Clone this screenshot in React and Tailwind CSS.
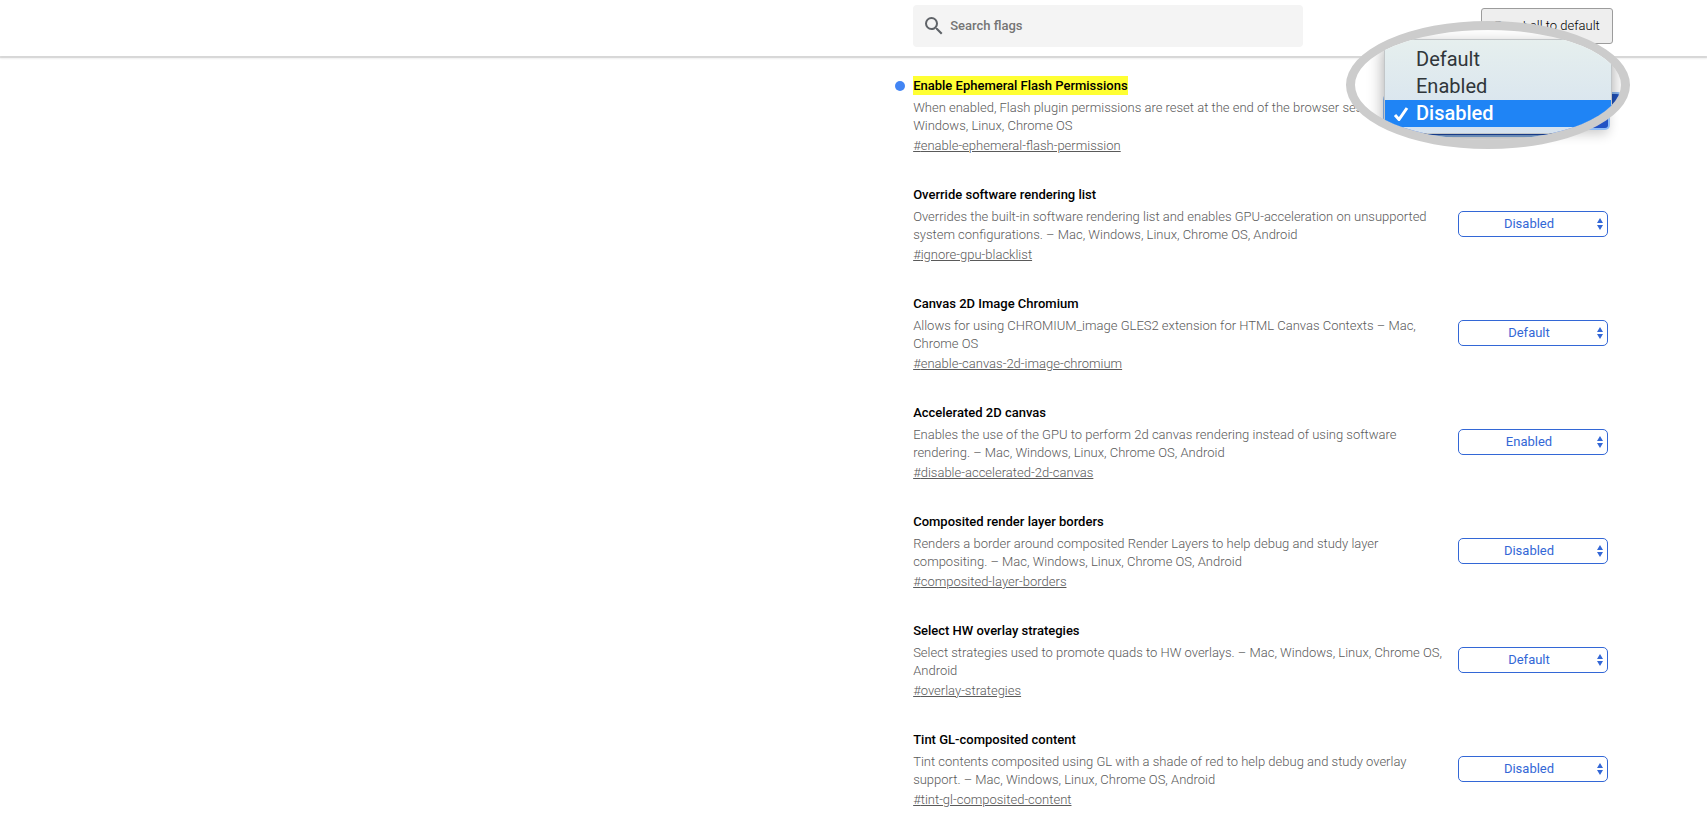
import { MdSearch } from "react-icons/md"

const FLAGS = [
  {
    id: "enable-ephemeral-flash-permission",
    name: "Enable Ephemeral Flash Permissions",
    description: "When enabled, Flash plugin permissions are reset at the end of the browser session. – Mac, Windows, Linux, Chrome OS",
    value: "Disabled",
    highlighted: true,
  },
  {
    id: "ignore-gpu-blacklist",
    name: "Override software rendering list",
    description:
      "Overrides the built-in software rendering list and enables GPU-acceleration on unsupported system configurations. – Mac, Windows, Linux, Chrome OS, Android",
    value: "Disabled",
  },
  {
    id: "enable-canvas-2d-image-chromium",
    name: "Canvas 2D Image Chromium",
    description: "Allows for using CHROMIUM_image GLES2 extension for HTML Canvas Contexts – Mac, Chrome OS",
    value: "Default",
  },
  {
    id: "disable-accelerated-2d-canvas",
    name: "Accelerated 2D canvas",
    description:
      "Enables the use of the GPU to perform 2d canvas rendering instead of using software rendering. – Mac, Windows, Linux, Chrome OS, Android",
    value: "Enabled",
  },
  {
    id: "composited-layer-borders",
    name: "Composited render layer borders",
    description:
      "Renders a border around composited Render Layers to help debug and study layer compositing. – Mac, Windows, Linux, Chrome OS, Android",
    value: "Disabled",
  },
  {
    id: "overlay-strategies",
    name: "Select HW overlay strategies",
    description: "Select strategies used to promote quads to HW overlays. – Mac, Windows, Linux, Chrome OS, Android",
    value: "Default",
  },
  {
    id: "tint-gl-composited-content",
    name: "Tint GL-composited content",
    description:
      "Tint contents composited using GL with a shade of red to help debug and study overlay support. – Mac, Windows, Linux, Chrome OS, Android",
    value: "Disabled",
  },
]

const OPTIONS = ["Default", "Enabled", "Disabled"]

function Header() {
  return (
    <header className="h-14 shadow-[0_2px_1px_rgba(0,0,0,0.11),0_3px_2px_rgba(0,0,0,0.05)]">
      <div className="mr-[94px] ml-auto flex w-[41%] items-start justify-between pt-[5px]">
        <label className="flex h-[42px] w-[390px] items-center rounded-sm bg-[#f4f4f4] pl-[9px] text-[#5f6368]">
          <MdSearch className="h-6 w-6" />
          <input
            type="search"
            aria-label="Search flags"
            placeholder="Search flags"
            className="ml-1 flex-1 text-[13px] font-medium outline-none placeholder:text-[#757575]"
          />
        </label>
        <button className="mt-[3px] h-9 w-[132px] rounded-[3px] border border-[#9c9c9c] bg-[#eeeeee] text-[13px] font-light text-black">
          Reset all to default
        </button>
      </div>
    </header>
  )
}

// Magnified view of the open menu, floating over the first select
function MenuLens({ value }) {
  return (
    <div className="pointer-events-none absolute -top-[81px] -right-[22px] z-10 h-[128px] w-[284px] overflow-hidden rounded-[50%] border-[9px] border-[#cccccc] bg-white">
      <div className="absolute top-[64px] left-[30px] h-[41px] w-[238px] rounded-md bg-[#2253bd] ring-2 ring-[#8fbcf5]" />
      <ul
        role="listbox"
        className="relative mt-[10px] ml-[30px] w-[226px] bg-linear-to-b from-[#e6efee] to-[#d5e2ef] py-[6px] shadow-[0_0_0_1px_#c2c6c8,0_6px_16px_rgba(0,0,0,0.4)]"
      >
        {OPTIONS.map((option) => {
          const selected = option === value

          return (
            <li
              key={option}
              role="option"
              aria-selected={selected}
              className={
                selected
                  ? "flex h-[27px] items-center bg-[#1f84f5] text-[20px] leading-[27px] font-medium text-white"
                  : "flex h-[27px] items-center text-[20px] leading-[27px] text-[#30363a]"
              }
            >
              <span className="flex w-[31px] justify-center">
                {selected && (
                  <svg viewBox="0 0 16 14" className="h-[14px] w-4 fill-none stroke-white stroke-[3]">
                    <path d="M2 8l4 4.5L14 1" />
                  </svg>
                )}
              </span>
              {option}
            </li>
          )
        })}
      </ul>
    </div>
  )
}

function FlagSelect({ flag }) {
  return (
    <div className="relative mr-[5px] w-[150px] shrink-0">
      <select
        id={`select-${flag.id}`}
        defaultValue={flag.value}
        className={
          flag.highlighted
            ? "h-[26px] w-full appearance-none rounded-[3px] bg-[#2353c4] text-center text-[13px] text-white shadow-[0_0_0_2px_#8fbcf5,0_6px_12px_rgba(0,0,0,0.2)]"
            : "h-[26px] w-full appearance-none rounded-[5px] border border-[#3367d6] bg-white pr-2 text-center text-[13px] text-[#3367d6]"
        }
      >
        {OPTIONS.map((option) => (
          <option key={option}>{option}</option>
        ))}
      </select>
      <svg viewBox="0 0 6 12" className="pointer-events-none absolute top-[7px] right-[5px] h-3 w-[6px] fill-[#3367d6]">
        <path d="M3 0L6 5H0zM3 12L0 7h6z" />
      </svg>
      {flag.highlighted && <MenuLens value={flag.value} />}
    </div>
  )
}

function Flag({ flag }) {
  return (
    <li className="flex h-[109px] items-start justify-between">
      <div className="relative w-[534px]">
        {flag.highlighted && <span className="absolute top-[5px] -left-[18px] h-[10px] w-[10px] rounded-full bg-[#4285f4]" />}
        <label htmlFor={`select-${flag.id}`} className="block text-[13px] leading-[19px] font-medium text-black">
          <span className={flag.highlighted ? "inline-block bg-[#ffff33]" : ""}>{flag.name}</span>
        </label>
        <p className="mt-1 text-[13px] leading-[18px] font-light text-[#5a5a5a]">{flag.description}</p>
        <a href={`#${flag.id}`} className="mt-[2px] block text-[13px] leading-[18px] font-light text-[#5a5a5a] underline">
          #{flag.id}
        </a>
      </div>
      <div className="pt-[26px]">
        <FlagSelect flag={flag} />
      </div>
    </li>
  )
}

function App() {
  return (
    <div className="bg-white font-[Roboto,sans-serif]">
      <Header />
      <main className="mr-[94px] ml-auto w-[41%] pt-5">
        <ul>
          {FLAGS.map((flag) => (
            <Flag key={flag.id} flag={flag} />
          ))}
        </ul>
      </main>
    </div>
  )
}

export default App
